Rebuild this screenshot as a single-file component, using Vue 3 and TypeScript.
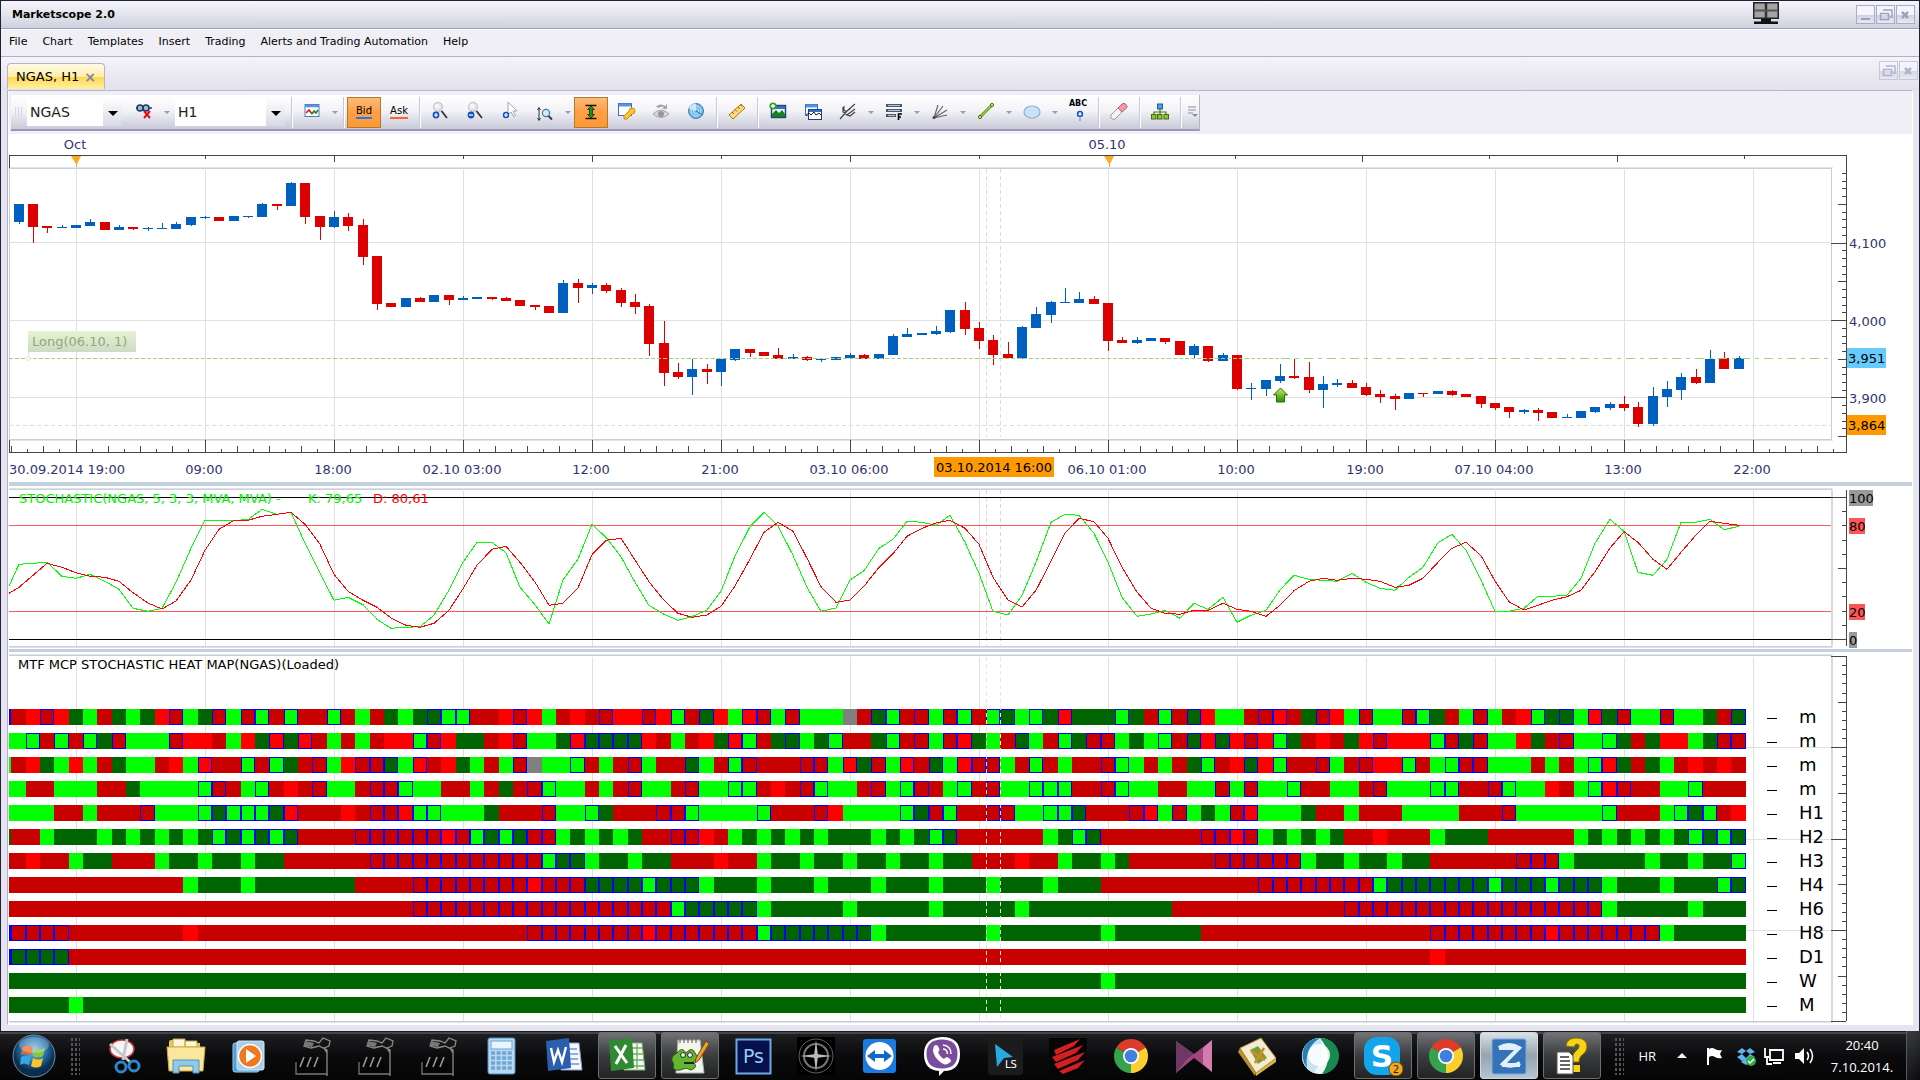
<script setup lang="ts">
type Candle = [up: number, top: number, bottom: number, high: number, low: number]

const menus = ['File', 'Chart', 'Templates', 'Insert', 'Trading', 'Alerts and Trading Automation', 'Help']

/* ---------- time scale ---------- */
const BARS = 121
const PITCH = 43 / 3
const barX = (i: number): number => Math.floor(19.2 + i * PITCH)
const cellX = (i: number): number => Math.floor(11.8 + i * PITCH)
const gridX = Array.from({ length: 14 }, (_, k) => 76 + k * 129)

const timeLabels: { x: number; text: string }[] = [
  { x: 204, text: '09:00' },
  { x: 333, text: '18:00' },
  { x: 462, text: '02.10 03:00' },
  { x: 591, text: '12:00' },
  { x: 720, text: '21:00' },
  { x: 849, text: '03.10 06:00' },
  { x: 1107, text: '06.10 01:00' },
  { x: 1236, text: '10:00' },
  { x: 1365, text: '19:00' },
  { x: 1494, text: '07.10 04:00' },
  { x: 1623, text: '13:00' },
  { x: 1752, text: '22:00' },
]

const topTicks = [
  [205, 4], [334, 7], [463, 4], [592, 7], [721, 4], [850, 7], [979, 4],
  [1235, 4], [1362, 7], [1489, 4], [1617, 7], [1744, 4],
]

const timeTicks = Array.from({ length: 114 }, (_, k) => {
  const x = Math.floor(11.6 + k * 16.125)
  const major = (k - 4) % 8 === 0 && k >= 4
  return { x, len: major ? 12 : k % 2 === 0 ? 6 : 3 }
})

/* ---------- price panel: offsets are thirds of a pixel below y = 160 ---------- */
const candles: Candle[] = [
  [1, 132, 186, 132, 192], [0, 132, 201, 132, 249], [0, 198, 204, 198, 219], [1, 201, 204, 195, 204],
  [1, 195, 204, 195, 204], [1, 186, 198, 177, 198], [0, 186, 210, 186, 210], [1, 201, 210, 195, 210],
  [0, 201, 207, 201, 210], [1, 204, 207, 201, 213], [1, 204, 207, 189, 207], [1, 192, 207, 186, 207],
  [1, 171, 195, 171, 198], [1, 171, 174, 168, 177], [0, 171, 183, 171, 183], [1, 168, 183, 168, 183],
  [1, 168, 171, 168, 174], [1, 132, 171, 129, 171], [0, 132, 138, 132, 150], [1, 69, 138, 66, 138],
  [0, 69, 171, 69, 192], [0, 168, 201, 168, 240], [1, 171, 201, 153, 204], [0, 171, 198, 159, 213],
  [0, 195, 291, 177, 315], [0, 288, 432, 288, 450], [0, 429, 441, 429, 441], [1, 414, 441, 414, 441],
  [0, 414, 426, 411, 426], [1, 405, 426, 405, 426], [0, 405, 420, 405, 435], [1, 414, 420, 408, 420],
  [1, 411, 417, 411, 417], [0, 411, 417, 411, 420], [0, 414, 423, 411, 423], [0, 420, 438, 420, 438],
  [0, 435, 441, 435, 450], [0, 438, 459, 438, 459], [1, 369, 459, 360, 459], [0, 369, 384, 357, 429],
  [1, 375, 384, 369, 402], [0, 375, 393, 369, 399], [0, 390, 429, 384, 441], [0, 426, 441, 402, 462],
  [0, 438, 552, 432, 588], [0, 549, 639, 483, 678], [0, 636, 651, 609, 657], [1, 627, 651, 597, 705],
  [0, 627, 636, 612, 672], [1, 597, 636, 597, 678], [1, 567, 600, 567, 603], [0, 567, 579, 567, 591],
  [0, 576, 588, 576, 588], [0, 585, 597, 564, 597], [1, 591, 597, 582, 597], [0, 591, 600, 588, 603],
  [1, 597, 600, 597, 606], [1, 591, 600, 591, 600], [1, 585, 594, 579, 594], [0, 585, 597, 582, 597],
  [1, 582, 597, 582, 597], [1, 528, 585, 522, 585], [1, 522, 531, 504, 531], [1, 519, 525, 519, 525],
  [1, 513, 522, 498, 525], [1, 450, 516, 450, 519], [0, 450, 507, 426, 525], [0, 504, 543, 486, 567],
  [0, 540, 585, 525, 615], [0, 582, 594, 546, 594], [1, 501, 594, 498, 597], [1, 462, 504, 441, 504],
  [1, 426, 465, 423, 489], [1, 426, 429, 384, 429], [1, 417, 429, 396, 429], [0, 417, 432, 408, 432],
  [0, 429, 543, 429, 573], [0, 540, 549, 531, 549], [1, 540, 549, 531, 552], [1, 534, 543, 534, 543],
  [0, 534, 546, 534, 552], [0, 543, 585, 543, 585], [1, 558, 585, 552, 597], [0, 558, 603, 558, 606],
  [1, 585, 603, 579, 603], [0, 585, 687, 585, 690], [1, 684, 687, 669, 720], [1, 660, 687, 660, 708],
  [1, 648, 663, 612, 669], [0, 648, 654, 597, 657], [0, 651, 690, 606, 699], [1, 672, 690, 648, 744],
  [1, 669, 675, 657, 681], [0, 669, 684, 660, 684], [0, 681, 705, 669, 708], [0, 702, 711, 690, 729],
  [0, 708, 717, 702, 750], [1, 699, 717, 699, 717], [0, 699, 702, 699, 711], [1, 693, 702, 693, 702],
  [0, 693, 705, 690, 708], [0, 702, 711, 702, 711], [0, 708, 732, 708, 744], [0, 729, 744, 729, 750],
  [0, 741, 756, 741, 774], [1, 750, 756, 747, 762], [0, 750, 759, 744, 783], [0, 756, 774, 756, 774],
  [1, 771, 774, 762, 774], [1, 753, 774, 753, 774], [1, 741, 756, 741, 759], [1, 732, 744, 726, 750],
  [0, 732, 744, 708, 753], [0, 741, 792, 726, 801], [1, 708, 792, 681, 798], [1, 687, 711, 663, 741],
  [1, 651, 690, 639, 720], [0, 651, 669, 627, 672], [1, 597, 669, 570, 669], [0, 594, 627, 576, 627],
  [1, 594, 627, 588, 627],
]

const bars = candles.map(([up, top, bottom, high, low], i) => ({
  x: barX(i),
  fill: up ? '#0060c0' : '#dc0000',
  y: 160 + top / 3,
  h: (bottom - top) / 3,
  wy: 160 + high / 3,
  wh: (low - high) / 3,
}))

const priceTicks = Array.from({ length: 35 }, (_, k) => ({
  y: Math.round(173 + k * 7.74),
  len: k % 10 === 9 ? 15 : k % 10 === 4 ? 8 : 4,
}))

/* ---------- stochastic panel: thirds of a pixel below y = 480 ---------- */
const kLine = [
  253, 250, 247, 289, 295, 283, 304, 328, 385, 394, 385, 307, 205, 121, 121, 121, 119, 88, 103, 97, 190,
  280, 361, 352, 374, 418, 445, 442, 440, 406, 330, 247, 187, 187, 218, 322, 374, 432, 300, 237, 133, 172,
  230, 307, 376, 403, 421, 410, 390, 334, 228, 140, 97, 138, 226, 322, 394, 384, 300, 272, 205, 178, 124,
  127, 136, 106, 187, 280, 394, 405, 346, 247, 127, 103, 106, 160, 247, 352, 409, 402, 391, 415, 370, 388,
  352, 427, 406, 391, 330, 286, 298, 301, 304, 280, 307, 325, 331, 292, 262, 188, 163, 211, 300, 394, 394,
  385, 349, 349, 346, 295, 190, 118, 154, 277, 286, 238, 127, 127, 118, 149, 139,
]
const dLine = [
  322, 286, 250, 262, 278, 289, 292, 304, 338, 369, 387, 363, 300, 211, 148, 121, 121, 109, 103, 97, 133,
  193, 283, 334, 361, 382, 414, 436, 442, 430, 391, 326, 256, 208, 199, 247, 306, 376, 370, 324, 224, 181,
  175, 240, 305, 361, 400, 412, 405, 379, 318, 237, 157, 127, 154, 235, 320, 367, 360, 319, 262, 221, 169,
  145, 129, 121, 145, 193, 292, 360, 381, 331, 244, 160, 115, 125, 175, 262, 336, 385, 400, 403, 391, 391,
  370, 388, 394, 409, 376, 332, 304, 295, 301, 295, 298, 304, 322, 316, 295, 247, 205, 187, 227, 303, 365,
  390, 376, 361, 350, 331, 275, 204, 155, 187, 238, 268, 217, 165, 124, 130, 136,
]
const toPoints = (start: number, line: number[]): string =>
  [`9,${480 + start / 3}`, ...line.map((v, i) => `${barX(i)},${(480 + v / 3).toFixed(1)}`)].join(' ')
const kPoints = toPoints(318, kLine)
const dPoints = toPoints(340, dLine)
const stochTicks = Array.from({ length: 11 }, (_, k) => ({
  y: Math.round(497 + k * 14.2),
  len: k % 10 === 0 ? 15 : k === 5 ? 8 : 4,
}))
const levels = [
  { text: '100', y: 490, w: 24, fill: '#999999' },
  { text: '80', y: 518, w: 16, fill: '#ff5555' },
  { text: '20', y: 604, w: 16, fill: '#ff5555' },
  { text: '0', y: 632, w: 8, fill: '#999999' },
]

/* ---------- heat map: run-length rows, capitals carry a blue outline ---------- */
const palette: Record<string, string> = { d: '#c80000', r: '#ff0000', g: '#00ff00', k: '#006400', x: '#808080' }
const heatRows: [label: string, lead: string, cells: string][] = [
  ['m', 'G', 'drDrkgdkgkrDgkDgDGdGddGdgdkgkKGGddrDrgdrdDrr' + 'DrGdKrgRDgDgggxdKGdDgDGdGKgGkRkkkGkdGdKrggdDR' + 'dkDrgDggDGkdgDgdrGkKgRkDggDggkdK'],
  ['m', 'g', 'gGdGdGkDgggDrrdgrkRkRdgdgdrrGDrkkdrDggkRKKKK' + 'rdgdrkRGdkKgkGddkGdDgDRkgdKgdGkDDgkgGdKrKrDrG' + 'kdrdkrDrrrGDkDggrkdDggGkdkrrgkDD'],
  ['m', 'g', 'drkgrgdkggdrgRddGdGkdDgrDDKgRdrkgdgDxggGdgdD' + 'gddKgdGDdddDDgRkDgRdKgRDDgdGdgddDGgdgdkGdrKrG' + 'ddDgdDrrGdgGDDgggdgdgGRkdkgdrdrd'],
  ['m', 'g', 'gddgggddkggggGDdgGdrdDggdDDGggddgdkdDGggdgdD' + 'ggdDggGGdrdDGggdDgGDdgGdDggGGGddDGggddggDgDgg' + 'GddggdDgggGGddDGggrdgGRDddggGddd'],
  ['H1', 'g', 'gggddgdddDgggGKGGGKRdddrdDDRGGgggkdddDggGkdd' + 'dDDGggggGdddDrggggGKDGddDDggGGKdddDRgDgkgDRgg' + 'gkddgdddggggdddDggggggGdddgGKGdr'],
  ['H2', 'k', 'ddgkkkgkgkgkgkGKGKGKddddDDDDDDRDGKGKDDgkgkgk' + 'ddDDrdgkgkgkgkkkgkgkGKddddddgkGKdddddddDDRDgk' + 'gkgkddrdddgkkkddddddgkgkgkgkGKGK'],
  ['H3', 'd', 'drddgkkdddgkkgkkgkk6d12DGKKgkkg' + 'kkdddrddgkkgkkgkkgkkgkkdddrddgkkgk6d5D' + 'Dgkkgkkgkk6d3Dg5kgkkgkkG'],
  ['H4', 'd', '12dg3kg7k4d8DR3D4K' + 'G3Kg3kg3kg3kg3kg3kg3kg3k11d2D' + '6DG7KG3KG3Kg3kg3kGK'],
  ['H6', 'd', '28d18DG5Kg5kg5kg5kg10k12d18Dg5kg3k'],
  ['H8', 'D', '4D8dr23d8DR7DG7Kg7kg7kg6k16d8DR7Dg5k'],
  ['D1', 'K', '4K95dr21d'],
  ['W', 'k', '76kg44k'],
  ['M', 'k', '4kg116k'],
]

interface Cell { x: number; w: number; fill: string; outlined: boolean }
const expand = (s: string): string => s.replace(/(\d+)([a-zA-Z])/g, (_m, n: string, c: string) => c.repeat(Number(n)))
const heat = heatRows.map(([label, lead, src], row) => {
  const cells: Cell[] = [{ x: 9, w: 2, fill: palette[lead.toLowerCase()], outlined: lead !== lead.toLowerCase() }]
  expand(src).slice(0, BARS).split('').forEach((c, i) => {
    const x = cellX(i)
    cells.push({ x, w: cellX(i + 1) - x, fill: palette[c.toLowerCase()], outlined: c !== c.toLowerCase() })
  })
  return { label, y: 709 + row * 24, cells }
})
const heatTicks = Array.from({ length: 41 }, (_, k) => ({
  y: Math.round(656 + k * 9.13),
  len: k % 10 === 0 ? 15 : k % 5 === 0 ? 8 : 4,
}))

/* ---------- toolbar ---------- */
const icons: Record<string, string> = {
  link: '<path d="M2 7h16" stroke="#1b3a66" stroke-width="1.500"/><circle cx="6" cy="7" r="3" fill="#9db9d8" stroke="#1b3a66" stroke-width="1.500"/><circle cx="12" cy="7" r="3" fill="#9db9d8" stroke="#1b3a66" stroke-width="1.500"/><path d="M10 10l6 7M16 10l-6 7" stroke="#e21010" stroke-width="2"/>',
  chart: '<rect x="3" y="3.500" width="14" height="12" fill="#fff" stroke="#4a7cc4"/><path d="M3 5h14" stroke="#5c94dd" stroke-width="2.600"/><path d="M4 12l3-3 3 4" stroke="#e01818" stroke-width="1.600" fill="none"/><path d="M10 13l2-3 2 2 2-3" stroke="#138a13" stroke-width="1.600" fill="none"/>',
  zoomin: '<circle cx="8" cy="6" r="4.500" fill="url(#glass)" stroke="#c9cbd0" stroke-width="1.300"/><path d="M11.500 10l5.500 7" stroke="#333" stroke-width="1.800"/><circle cx="6" cy="14" r="3.400" fill="#1454b8"/><path d="M4 14h4M6 12v4" stroke="#fff" stroke-width="1.200"/>',
  zoomout: '<circle cx="8" cy="6" r="4.500" fill="url(#glass)" stroke="#c9cbd0" stroke-width="1.300"/><path d="M11.500 10l5.500 7" stroke="#333" stroke-width="1.800"/><circle cx="6" cy="14" r="3.400" fill="#1454b8"/><path d="M4 14h4" stroke="#fff" stroke-width="1.200"/>',
  pointer: '<path d="M8 1v13l3-3 3 5 1.500-1-2.500-5h4z" fill="#fff" stroke="#a3a6ac"/><circle cx="6" cy="14" r="3.200" fill="#1454b8"/><path d="M4 14h4M6 12v4" stroke="#fff" stroke-width="1.200"/>',
  vzoom: '<path d="M4 7v12M2.500 9L4 6.500 5.500 9M2.500 17L4 19.500 5.500 17" stroke="#333" fill="none"/><circle cx="11" cy="12" r="3.600" fill="#cfeaf8" stroke="#3f7ea8" stroke-width="1.200"/><path d="M13.500 15l3.500 3.500" stroke="#333" stroke-width="1.800"/>',
  fit: '<path d="M4.500 4.500h11M4.500 17.500h11" stroke="#111" stroke-width="1.300"/><path d="M10 5l3.500 3.500h-2v5h2L10 17l-3.500-3.500h2v-5h-2z" fill="#1c8f1c" stroke="#0c300c" stroke-width=".8"/>',
  key: '<rect x="2.500" y="2.500" width="13" height="12" fill="#fff" stroke="#3a6fc0"/><path d="M3 4h12" stroke="#5b93de" stroke-width="3"/><path d="M8 15l5-5a3 3 0 1 1 3 3l-5 5H8z" fill="#ffc42e" stroke="#c78d14"/>',
  eye: '<path d="M5 6a6 6 0 0 1 9-1l2-2v5h-5l2-1.500a4 4 0 0 0-5 .5z" fill="#a6a6ab"/><path d="M2 13q8-8 16 0-8 7-16 0z" fill="#d7d7da" stroke="#a6a6ab"/><circle cx="10" cy="13" r="3" fill="#97979c"/>',
  radar: '<circle cx="10" cy="10" r="7.500" fill="#6cb5e4" stroke="#3884bd"/><circle cx="10" cy="10" r="5" fill="none" stroke="#d4edfb"/><circle cx="10" cy="10" r="2.500" fill="none" stroke="#d4edfb"/><path d="M10 10V2.500a7.500 7.500 0 0 0-7 5z" fill="#c9e8fa"/><path d="M10 10l7 4" stroke="#2b74ad"/>',
  ruler: '<path d="M2 14L14 3l4 4L6 18z" fill="#ffd877" stroke="#a97c1c"/><path d="M5 11l2 2M8 8.500l2 2M11 6l2 2M13.500 4l1.500 1.500" stroke="#8a6210"/>',
  picture: '<rect x="3.500" y="4.500" width="14" height="12" fill="#e8f5ff" stroke="#1c3f86" stroke-width="1.400"/><path d="M4 16v-3l4-4 3 3 3-3 3 4v3z" fill="#16821c"/><path d="M4 6.500h13" stroke="#3a6fc0" stroke-width="3"/><circle cx="5" cy="5" r="3.600" fill="#3a9c22"/><path d="M3 5h4M5 3v4" stroke="#fff" stroke-width="1.300"/>',
  windows: '<rect x="2.500" y="3.500" width="12" height="11" fill="#fff" stroke="#3a6fc0"/><path d="M3 5h11" stroke="#5b93de" stroke-width="3"/><rect x="5.500" y="8.500" width="13" height="10" fill="#fff" stroke="#1c3f86"/><path d="M6 10h12" stroke="#3a6fc0" stroke-width="2"/><path d="M3 14l3-2 2 2 3-3 2 3 3-2 2 2" stroke="#222" fill="none"/>',
  fork: '<path d="M2 18L9 10M6 5q-1 6 3 5l8-7M5 6v5l4 3 8-6M9 10l4-3M9 14l3 1 5-4" stroke="#444" stroke-width="1.200" fill="none"/>',
  fib: '<path d="M2 4.500h16M2 9.500h16M2 14.500h10" stroke="#4a5668" stroke-width="3"/><path d="M4 4.500h12M4 9.500h12M4 14.500h7" stroke="#b8c4d4" stroke-width="1"/><path d="M14.500 19v-6H18M14.500 16H17" stroke="#000" stroke-width="1.600" fill="none"/>',
  fan: '<path d="M4 17L8 4M4 17L13 5M4 17L17 9M4 17l13-3" stroke="#666" stroke-width="1.200"/><circle cx="4" cy="16.500" r="1.500" fill="#444"/>',
  line: '<path d="M4 16L16 4" stroke="#4f7f14" stroke-width="2.800"/><path d="M4 16L16 4" stroke="#a6d63d" stroke-width="1.400"/><circle cx="4" cy="16" r="1.600" fill="#d4ed6c" stroke="#4c6d0b"/><circle cx="16" cy="4" r="1.600" fill="#d4ed6c" stroke="#4c6d0b"/>',
  ellipse: '<ellipse cx="10" cy="11" rx="8" ry="6" fill="#cde2f6" stroke="#8db2d8" stroke-width="1.200"/>',
  text: '<circle cx="12" cy="13" r="3.200" fill="#1454b8"/><path d="M10 13h4M12 11v4" stroke="#fff" stroke-width="1.200"/><path d="M12 17v3" stroke="#8fb2e6" stroke-width="2"/>',
  eraser: '<path d="M2 14l7-7 4 4-7 7q-2 1-3.500-.5T2 14z" fill="#f4f4f4" stroke="#9a9a9a"/><path d="M9 7l4-4q2-1.500 4 .5t.5 3.500l-4.500 4z" fill="#f19aa6" stroke="#b86670"/>',
  tree: '<path d="M10 6v5M4 14v-3h12v3M10 11v3" stroke="#4a7a10" fill="none" stroke-width="1.200"/><rect x="7.500" y="3" width="5" height="5" fill="#4b9bea" stroke="#1f5fa8"/><rect x="1.500" y="13.500" width="4.500" height="4.500" fill="#8fc52c" stroke="#3f6d0a"/><rect x="7.500" y="13.500" width="4.500" height="4.500" fill="#8fc52c" stroke="#3f6d0a"/><rect x="14" y="13.500" width="4.500" height="4.500" fill="#8fc52c" stroke="#3f6d0a"/>',
  more: '<path d="M3 6h8M3 9h8M3 12h5" stroke="#8d8da2"/><path d="M7 13h6l-3 3z" fill="#8d8da2"/>',
}

type Tool = { kind: 'icon' | 'arrow' | 'sep' | 'side'; name?: string; on?: boolean }
const I = (name: string, on = false): Tool => ({ kind: 'icon', name, on })
const A: Tool = { kind: 'arrow' }
const S: Tool = { kind: 'sep' }
const tools: Tool[] = [
  S, I('chart'), A, S, { kind: 'side', name: 'Bid', on: true }, { kind: 'side', name: 'Ask' }, S,
  I('zoomin'), I('zoomout'), I('pointer'), I('vzoom'), A, I('fit', true), I('key'), I('eye'), I('radar'), S,
  I('ruler'), S, I('picture'), I('windows'), I('fork'), A, I('fib'), A, I('fan'), A, I('line'), A,
  I('ellipse'), A, I('text'), S, I('eraser'), S, I('tree'), S,
]

/* ---------- taskbar ---------- */
const chrome = '<path d="M20 20L5.300 11.500A17 17 0 0 1 34.700 11.500z" fill="#dd3b2c"/><path d="M20 20L34.700 11.500A17 17 0 0 1 20 37z" fill="#fbcf2f"/><path d="M20 20v17A17 17 0 0 1 5.300 11.500z" fill="#35a34c"/><circle cx="20" cy="20" r="8" fill="#fff"/><circle cx="20" cy="20" r="6.300" fill="#3f7fe0"/>'
const robot = '<path d="M3 37V22L12 28V22L21 28V22L30 28V37z" fill="#050505"/><path d="M4 26v12h31" fill="none" stroke="#777" stroke-width="1.300"/><path d="M8 31l4-10M15 31l4-10M22 31l4-10" stroke="#999" stroke-width="1.600"/><path d="M35 38V14l-8-4-8 2-7-2 2-6 8 1 5 2 4-5 7 3-1 5-5 2 3 5v23z" fill="#151515" stroke="#8a8a8a" stroke-width="1.300"/><path d="M13 5l9 2-2 4-8-1z" fill="#777"/>'
const tasks: { name: string; state?: string; art: string }[] = [
  { name: 'Snipping tool', art: '<ellipse cx="19" cy="13" rx="12" ry="9" fill="#f6f6f6" stroke="#c43a3a" stroke-width="1.500"/><path d="M7 8l20 18M24 3L20 24" stroke="#c8c8cc" stroke-width="3"/><circle cx="31" cy="30" r="5" fill="none" stroke="#2d86c8" stroke-width="3"/><circle cx="18" cy="31" r="5" fill="none" stroke="#2d86c8" stroke-width="3"/>' },
  { name: 'Explorer', art: '<path d="M3 6q0-2 2-2h9l3 3h17v27H3z" fill="#e8c766"/><path d="M7 3h12v8H7zM19 5h12v6H19z" fill="#fff6d8" stroke="#c9a545"/><path d="M1 11h38l-2 24H3z" fill="#fae69d" stroke="#cfa93f"/><path d="M7 37V24h26v13h-6v-7H13v7z" fill="#8ec9ea" stroke="#4e95c0"/>' },
  { name: 'Media player', art: '<rect x="4" y="7" width="26" height="29" rx="2" fill="#4d9fd8" stroke="#9bd0f2"/><rect x="8" y="5" width="27" height="29" rx="2" fill="#a9cfe8" stroke="#d4ebf8"/><circle cx="21" cy="20" r="11.500" fill="#f0781e" stroke="#fff" stroke-width="1.500"/><path d="M17 13l10 7-10 7z" fill="#fff"/>' },
  { name: 'Tool A', art: robot },
  { name: 'Tool B', art: robot },
  { name: 'Tool C', art: robot },
  { name: 'Calculator', art: '<rect x="7" y="2" width="27" height="36" rx="2" fill="#b9d9f1" stroke="#4d8cc0"/><rect x="10" y="5" width="21" height="8" fill="#e9f5fd" stroke="#6ba2cf"/><path d="M10 17h21M10 22h21M10 27h21M10 32h21" stroke="#6fa6d2" stroke-width="3.400" stroke-dasharray="4 1.600"/>' },
  { name: 'Word', art: '<path d="M14 7h21l3 27H17z" fill="#f4f8fd" stroke="#7e9cc8"/><path d="M20 13h13M20 18h14M21 23h13M22 28h13" stroke="#7196cf" stroke-width="1.500"/><path d="M2 5l23-3 2 30-23 3z" fill="#2b5fae"/><path d="M7 12l3 14 4-12 4 12 4-15" stroke="#fff" stroke-width="2.400" fill="none"/>' },
  { name: 'Excel', state: 'open', art: '<path d="M14 7h21l3 27H17z" fill="#f4fbf1" stroke="#7fae75"/><path d="M25 12h11M25 18h11M26 24h11M26 30h11M30 8v25" stroke="#6fab5d" stroke-width="1.300"/><path d="M2 5l23-3 2 30-23 3z" fill="#2f8a32"/><path d="M8 10l12 17M19 9L9 28" stroke="#fff" stroke-width="3"/>' },
  { name: 'Notepad++', state: 'open', art: '<path d="M8 4h22l4 33H6z" fill="#f2f5ee" stroke="#adb8a4"/><path d="M10 3v4M14 3v4M18 3v4M22 3v4M26 3v4" stroke="#555"/><path d="M7 17q5-7 9 0 6-7 9 0 5 6-2 9 6 5-2 8-5-3-8-1-6 3-10-1 2-4-1-7-1-5 5-8z" fill="#63b62f" stroke="#2a5c10"/><circle cx="13" cy="19" r="2.400" fill="#fff" stroke="#222"/><circle cx="20" cy="19" r="2.400" fill="#fff" stroke="#222"/><path d="M14 27h10" stroke="#222" stroke-width="2"/><path d="M36 5L26 22l-1 5 4-3L39 8z" fill="#f0a030" stroke="#744a10"/>' },
  { name: 'Photoshop', art: '<rect x="3.500" y="3.500" width="34" height="34" fill="#06104a" stroke="#6fa8e8" stroke-width="2"/><text x="20.500" y="27" text-anchor="middle" fill="#9cc8f8" font-size="19">Ps</text>' },
  { name: 'Compass', art: '<rect x="1" y="1" width="38" height="38" fill="#000"/><circle cx="20" cy="20" r="17" fill="none" stroke="#666" stroke-width="1"/><circle cx="20" cy="20" r="12" fill="none" stroke="#777" stroke-width="2"/><path d="M20 4l1.800 14.200L36 20l-14.200 1.800L20 36l-1.800-14.200L4 20l14.200-1.800z" fill="#bbb"/>' },
  { name: 'TeamViewer', art: '<rect x="4" y="3" width="33" height="34" rx="3" fill="#1c7be0"/><circle cx="20.500" cy="20" r="14" fill="#fff"/><path d="M8 20l8-6v4h9v-4l8 6-8 6v-4h-9v4z" fill="#1268c8"/>' },
  { name: 'Viber', art: '<path d="M20 1q18 0 18 17T22 35l-5 5v-5Q2 34 2 18T20 1z" fill="#fff"/><path d="M20 3.500q15.500 0 15.500 14.500T20 32.500 4.500 18 20 3.500z" fill="#7a4d9c"/><path d="M12 10q3-3 5 2 1 3-1 4 2 5 6 7 2-3 5-1 4 3 0 5-4 4-11-3t-4-14z" fill="#fff"/><path d="M21 9q8 1 8 9M21 13q4 0 4.500 5" fill="none" stroke="#fff" stroke-width="1.500"/>' },
  { name: 'LS', art: '<rect x="3" y="1" width="35" height="38" rx="3" fill="#1b1b1b"/><path d="M10 8l18 13-9 1-7 9z" fill="#28a9e2"/><text x="20" y="32" fill="#fff" font-size="10">LS</text>' },
  { name: 'Claw', art: '<rect x="1" y="2" width="38" height="36" fill="#050505"/><path d="M6 14l26-11-6 7-18 9zM4 21l31-12-7 8-20 9zM6 28l31-12-7 8-20 9zM11 35l26-11-7 8-15 6z" fill="#d21f22"/>' },
  { name: 'Chrome', art: chrome },
  { name: 'Media maker', art: '<path d="M2 5l18 13L38 4v32L20 22 2 37z" fill="#a0467e"/><path d="M2 5l18 13-8 6L2 37z" fill="#6e3866"/><path d="M38 4v32l-9-8V12z" fill="#d47cae"/>' },
  { name: 'Map', art: '<path d="M3 12L24 2l15 20-20 15z" fill="#f3ecd2" stroke="#a58538"/><path d="M3 12l16 25-1 3L1 16z" fill="#b8902c"/><path d="M19 37l20-15v4L19 40z" fill="#d8b14a"/><path d="M13 14l8-4 9 12-9 6z" fill="#6fa046"/><path d="M14 15l14 9M27 12l-9 15" stroke="#d88a1a" stroke-width="2.500"/>' },
  { name: 'Globe', art: '<circle cx="20" cy="20" r="18" fill="#eef7f4"/><path d="M20 2a18 18 0 0 1 2 36Q35 20 20 2z" fill="#168a52"/><path d="M20 2a18 18 0 0 0-6 35Q26 18 20 2z" fill="#c5e3f2"/><path d="M20 2Q4 12 7 32 0 22 4 12T20 2z" fill="#2b7db0"/><circle cx="19" cy="19" r="11" fill="#fff" opacity=".85"/>' },
  { name: 'Skype', state: 'open', art: '<rect x="1" y="1" width="36" height="38" rx="13" fill="#12a5ea"/><text x="19" y="31" text-anchor="middle" fill="#fff" font-size="31" font-weight="bold">S</text><circle cx="33" cy="33" r="7" fill="#f6a91d" stroke="#7c4c00"/><text x="33" y="37" text-anchor="middle" fill="#222" font-size="10">2</text>' },
  { name: 'Chrome windows', state: 'open', art: chrome },
  { name: 'Marketscope', state: 'active', art: '<rect x="3" y="3" width="34" height="35" rx="2" fill="#3473b8" stroke="#7faee0"/><path d="M10 12q10-6 20 0L14 28q8 4 17-1M10 12h17M13 29h18" fill="none" stroke="#e2effc" stroke-width="4"/>' },
  { name: 'Help', state: 'open', art: '<path d="M14 10q1-8 10-8 11 0 11 9 0 5-6 9-2 2-2 6h-7q0-8 4-11 4-3 3-6-3-3-5 2z" fill="#f7d417" stroke="#8b7300"/><rect x="20" y="29" width="8" height="7" fill="#f7d417"/><path d="M5 16h12l4 4v18H5z" fill="#fff" stroke="#555"/><path d="M8 21h9M8 25h10M8 29h10M8 33h10" stroke="#333" stroke-width="1.300"/>' },
]
</script>

<template>
  <div class="app">
    <svg class="defs" width="0" height="0" aria-hidden="true">
      <defs>
        <radialGradient id="glass" cx="40%" cy="35%"><stop offset="0" stop-color="#fff" /><stop offset="1" stop-color="#dde1e5" /></radialGradient>
        <linearGradient id="arrowUp" x2="0" y2="1"><stop offset="0" stop-color="#c8ee5a" /><stop offset="1" stop-color="#2f8a08" /></linearGradient>
        <linearGradient id="note" x2="0" y2="1"><stop offset="0" stop-color="#e6f3d2" /><stop offset="1" stop-color="#cfdac6" /></linearGradient>
      </defs>
    </svg>

    <main class="window">
      <header class="title">
        <h1>Marketscope 2.0</h1>
        <svg class="monitor" width="26" height="24" viewBox="0 0 26 24" aria-hidden="true">
          <rect x="0" y="1" width="26" height="17" fill="#222" />
          <path d="M1.500 2.500h23v14h-23z" fill="#a4a4a4" />
          <path d="M13 2v15" stroke="#333" stroke-width="2.500" />
          <path d="M1 9.500h24" stroke="#555" stroke-width="2" />
          <path d="M8 18h10v3H8zM1 20.500h24V23H1z" fill="#111" />
        </svg>
        <div class="controls">
          <button class="ctl" type="button" aria-label="Minimize"><svg width="17" height="17"><path d="M4 12h9v2H4z" fill="#9ea1c2" /></svg></button>
          <button class="ctl" type="button" aria-label="Restore"><svg width="17" height="17"><path d="M6 4h9v7h-2M3.500 7.500h8v6h-8z" fill="none" stroke="#9ea1c2" stroke-width="1.500" /></svg></button>
          <button class="ctl" type="button" aria-label="Close"><svg width="17" height="17"><path d="M5 6l6 6M11 6l-6 6" stroke="#9ea1c2" stroke-width="2.500" /></svg></button>
        </div>
      </header>

      <nav class="menu">
        <button v-for="m in menus" :key="m" type="button">{{ m }}</button>
      </nav>

      <div class="tabs">
        <button class="tab" type="button">NGAS, H1 <span aria-hidden="true">×</span></button>
        <div class="controls dim">
          <button class="ctl" type="button" aria-label="Restore chart"><svg width="17" height="17"><path d="M6 4h9v7h-2M3.500 7.500h8v6h-8z" fill="none" stroke="#9ea1c2" stroke-width="1.500" /></svg></button>
          <button class="ctl" type="button" aria-label="Close chart"><svg width="17" height="17"><path d="M5 6l6 6M11 6l-6 6" stroke="#9ea1c2" stroke-width="2.500" /></svg></button>
        </div>
      </div>

      <section class="client">
        <div class="dock">
          <div class="toolbar">
            <i class="grip"></i>
            <div class="combo symbol">
              <select aria-label="Symbol"><option>NGAS</option></select><i></i>
            </div>
            <button class="tool" type="button" aria-label="link"><svg width="20" height="22" viewBox="0 0 20 22" v-html="icons.link"></svg></button>
            <button class="drop" type="button" aria-label="Link options"></button>
            <div class="combo period">
              <select aria-label="Period"><option>H1</option></select><i></i>
            </div>
            <template v-for="(t, i) in tools" :key="i">
              <i v-if="t.kind === 'sep'" class="sep"></i>
              <button v-else-if="t.kind === 'arrow'" class="drop" type="button" aria-label="Options"></button>
              <button v-else-if="t.kind === 'side'" class="tool side" :class="[t.name, { on: t.on }]" type="button"><span>{{ t.name }}</span></button>
              <button v-else class="tool" :class="{ on: t.on, abc: t.name === 'text' }" type="button" :aria-label="t.name">
                <span v-if="t.name === 'text'" class="abc-word">ABC</span>
                <svg width="20" height="22" viewBox="0 0 20 22" v-html="icons[t.name ?? '']"></svg>
              </button>
            </template>
            <button class="more" type="button" aria-label="More"><svg width="14" height="20" viewBox="0 0 14 20" v-html="icons.more"></svg></button>
          </div>
        </div>

        <!-- price -->
        <svg class="panel" viewBox="9 134 1903 348">
          <g shape-rendering="crispEdges">
            <path d="M9 167.500H1833M9 440.500H1833" stroke="#e0e3e6" />
            <path v-for="x in gridX" :key="x" :d="`M${x + 0.5} 170V440`" stroke="#e0e0e0" />
            <path d="M9 242.500H1830M9 320.500H1830M9 397.500H1830" stroke="#e0e0e0" />
            <path d="M9 168.500H1831.500V439.500H9M9.500 168V440" fill="none" stroke="#c4cfdb" />
            <path d="M9 425.500H1832M986.500 169V437M1000.500 169V437" stroke="#dcdcdc" stroke-dasharray="4 3" />
            <path d="M9.500 168V155.500H1846.500V452.500H9.500V440" fill="none" stroke="#444" />
            <path v-for="t in topTicks" :key="'a' + t[0]" :d="`M${t[0] + 0.5} 155v${t[1]}`" stroke="#444" />
            <path v-for="t in timeTicks" :key="'b' + t.x" :d="`M${t.x + 0.5} 452v${-t.len}`" stroke="#444" />
            <path v-for="t in priceTicks" :key="'c' + t.y" :d="`M1846 ${t.y + 0.5}h${-t.len}`" stroke="#444" />
            <g v-for="(b, i) in bars" :key="i" :fill="b.fill">
              <rect :x="b.x" :y="b.wy" width="1" :height="b.wh" />
              <rect :x="b.x - 5" :y="b.y" width="10" :height="b.h" />
            </g>
            <path d="M9 358.500H1280" stroke="#a4d084" stroke-dasharray="4 2" />
            <path d="M1281 358.500H1829" stroke="#a4d084" stroke-dasharray="9 5 4 5" />
          </g>
          <path d="M71 156h10l-4 8v3h-1v-3zM1104 156h10l-4 8v3h-1v-3z" fill="#ffa726" />
          <path d="M1280.500 388l7 7h-3v7h-8v-7h-3z" fill="url(#arrowUp)" stroke="#2c6b0d" />
          <rect x="28" y="331" width="108" height="21" fill="url(#note)" />
          <path d="M28.500 352v5" stroke="#dfedc9" />
          <circle cx="28" cy="358.500" r="2" fill="#fff" stroke="#dfedc9" />
          <text x="32" y="346" class="long">Long(06.10, 1)</text>
          <g class="axis">
            <text x="75" y="149" text-anchor="middle">Oct</text>
            <text x="1107" y="149" text-anchor="middle">05.10</text>
            <text x="9" y="474">30.09.2014 19:00</text>
            <text v-for="l in timeLabels" :key="l.text" :x="l.x" y="474" text-anchor="middle">{{ l.text }}</text>
            <text x="1849" y="248">4,100</text>
            <text x="1849" y="326">4,000</text>
            <text x="1849" y="403">3,900</text>
          </g>
          <rect x="934" y="457" width="120" height="20" fill="#ff9900" />
          <rect x="1847" y="348" width="39" height="20" fill="#66ccff" />
          <rect x="1847" y="415" width="39" height="20" fill="#ff9900" />
          <text x="994" y="472" text-anchor="middle">03.10.2014 16:00</text>
          <text x="1848" y="363">3,951</text>
          <text x="1848" y="430">3,864</text>
        </svg>

        <div class="split"></div>

        <!-- stochastic -->
        <svg class="panel" viewBox="9 486 1903 163">
          <g shape-rendering="crispEdges">
            <path d="M9 488.500H1833M9 647.500H1833" stroke="#e0e3e6" />
            <path v-for="x in gridX" :key="x" :d="`M${x + 0.5} 491V647`" stroke="#e0e0e0" />
            <path d="M986.500 490V645M1000.500 490V645" stroke="#d8d8d8" stroke-dasharray="4 3" />
            <path d="M9 489.500H1832M9 646.500H1832" stroke="#c4cfdb" />
            <path d="M1832 490V646" stroke="#d4dae2" stroke-width="2" />
            <path d="M9 525.500H1831M9 611.500H1831" stroke="#ff5555" />
            <path d="M9 497.500H1831M9 639.500H1831" stroke="#000" />
            <path d="M1846.500 490V646" stroke="#444" />
            <path v-for="t in stochTicks" :key="t.y" :d="`M1846 ${t.y + 0.5}h${-t.len}`" stroke="#444" />
            <polyline :points="kPoints" fill="none" stroke="#00ff00" />
            <polyline :points="dPoints" fill="none" stroke="#ff0000" />
          </g>
          <text x="19" y="503" fill="#00f000">STOCHASTIC(NGAS, 5, 3, 3, MVA, MVA) -</text>
          <text x="308" y="503" fill="#00f000">K: 79,65</text>
          <text x="373" y="503" fill="#ff0000">D: 80,61</text>
          <g v-for="l in levels" :key="l.text">
            <rect x="1849" :y="l.y" :width="l.w" height="16" :fill="l.fill" />
            <text x="1849" :y="l.y + 13">{{ l.text }}</text>
          </g>
        </svg>

        <div class="split thin"></div>

        <!-- heat map -->
        <svg class="panel" viewBox="9 652 1903 372">
          <g shape-rendering="crispEdges">
            <path d="M9 654.500H1833M9 1022.500H1833" stroke="#e0e3e6" />
            <path v-for="x in gridX" :key="x" :d="`M${x + 0.5} 657V1022`" stroke="#e0e0e0" />
            <path d="M9 747.500H1830M9 839.500H1830M9 930.500H1830" stroke="#e0e0e0" />
            <path d="M9 655.500H1832M9 1021.500H1832" stroke="#c4cfdb" />
            <path d="M1832 656V1021" stroke="#d4dae2" stroke-width="2" />
            <path d="M1846.500 656V1021" stroke="#444" />
            <path v-for="t in heatTicks" :key="t.y" :d="`M1846 ${t.y + 0.5}h${-t.len}`" stroke="#444" />
            <g v-for="row in heat" :key="row.y">
              <template v-for="c in row.cells" :key="c.x">
                <rect :x="c.x" :y="row.y" :width="c.w" height="16" :fill="c.fill" />
                <rect v-if="c.outlined" :x="c.x + 0.5" :y="row.y + 0.5" :width="c.w - 1" height="15" fill="none" stroke="#0000ff" />
              </template>
            </g>
            <path d="M986.500 657V1020M1000.500 657V1020" stroke="#e6e6e6" stroke-dasharray="4 3" />
          </g>
          <text x="18" y="669">MTF MCP STOCHASTIC HEAT MAP(NGAS)(Loaded)</text>
          <g v-for="row in heat" :key="'l' + row.y" class="rowname">
            <path :d="`M1767 ${row.y + 9.5}h10`" stroke="#000" shape-rendering="crispEdges" />
            <text x="1799" :y="row.y + 14">{{ row.label }}</text>
          </g>
        </svg>
      </section>
    </main>

    <footer class="taskbar">
      <button class="start" type="button" aria-label="Start">
        <svg width="46" height="46" viewBox="0 0 46 46">
          <defs><radialGradient id="orb" cy="35%"><stop offset="0" stop-color="#7fc4ec" /><stop offset=".6" stop-color="#256fa8" /><stop offset="1" stop-color="#0b2c4c" /></radialGradient></defs>
          <circle cx="23" cy="23" r="21" fill="url(#orb)" stroke="#6f8da4" />
          <path d="M12 14q5-3 10 0l-2 8q-5-3-10 0z" fill="#f0672a" />
          <path d="M24 15q5 3 10 0l-2 8q-5 3-10 0z" fill="#8cc63e" />
          <path d="M10 24q5-3 10 0l-2 8q-5-3-9 0z" fill="#38a5e4" />
          <path d="M22 25q5 3 10 0l-2 8q-5 3-10 0z" fill="#fdc52b" />
          <ellipse cx="23" cy="12" rx="15" ry="8" fill="#fff" opacity=".25" />
        </svg>
      </button>
      <i class="dots"></i>
      <div class="tasks">
        <button v-for="t in tasks" :key="t.name" class="task" :class="t.state" type="button" :aria-label="t.name">
          <svg width="40" height="40" viewBox="0 0 40 40" v-html="t.art"></svg>
        </button>
      </div>
      <i class="dots"></i>
      <div class="tray">
        <span class="lang">HR</span>
        <svg class="status" width="142" height="24" viewBox="0 0 142 24" aria-hidden="true">
          <path d="M5 14l5-5 5 5z" fill="#f2f2f2" />
          <path d="M36 4v17" stroke="#fff" stroke-width="2" /><path d="M37 5q3-2 6 0t7 1l-2 4 2 4q-4 1-7-1t-6 0z" fill="#fff" />
          <path d="M65 8l5-4 4 3-4 3zM83 8l-5-4-4 3 4 3zM65 13l5 4 4-3-4-4zM83 13l-5 4-4-3 4-4zM69 18l5-4 5 4-5 3z" fill="#5eb3f2" />
          <circle cx="79" cy="17" r="5" fill="#2fae3f" /><path d="M76 17l2 2 4-4" stroke="#fff" stroke-width="1.500" fill="none" />
          <path d="M98 6h13v10H98zM93 4v9h4M101 19h8M95 13v7h5" fill="none" stroke="#fff" stroke-width="1.800" />
          <path d="M123 9h4l5-5v16l-5-5h-4z" fill="#fff" /><path d="M135 8q3 4 0 8M138 5q5 7 0 14" fill="none" stroke="#fff" stroke-width="1.500" />
        </svg>
        <time class="clock"><span>20:40</span><span>7.10.2014.</span></time>
        <button class="peek" type="button" aria-label="Show desktop"></button>
      </div>
    </footer>
  </div>
</template>

<style>
body {
  background: #0b0b0d;
}
</style>

<style scoped>
.app {
  min-height: 100vh;
  display: flex;
  flex-direction: column;
  font: 13px "DejaVu Sans", Verdana, sans-serif;
  color: #000;
}
.app *,
.app {
  box-sizing: border-box;
}
button {
  font: inherit;
  color: inherit;
  background: none;
  border: 0;
  padding: 0;
  margin: 0;
}
.defs {
  position: absolute;
}
.window {
  flex: 1;
  border: 1px solid #20203a;
  border-bottom: 0;
  background: #e5e4ef;
}
.title {
  height: 28px;
  display: flex;
  align-items: center;
  padding-left: 11px;
  background: linear-gradient(#f6f6fb, #e3e4ec 50%, #ced1de);
  border-bottom: 1px solid #9c9fc0;
}
.title h1 {
  margin: 0;
  font-size: 11px;
  font-weight: bold;
  flex: 1;
}
.monitor {
  margin-right: 77px;
  align-self: flex-start;
}
.controls {
  display: flex;
  gap: 1px;
  margin-right: 4px;
}
.ctl {
  width: 19px;
  height: 19px;
  border: 1px solid #a9acc9;
  background: linear-gradient(#f5f5fb 50%, #cfd1e0 52%, #e8e9f2);
  display: flex;
}
.dim {
  margin-right: 1px;
}
.dim .ctl {
  border-color: #b9bbd3;
  opacity: 0.75;
}
.menu {
  height: 28px;
  display: flex;
  align-items: center;
  gap: 15px;
  padding: 0 8px 4px;
  font-size: 11px;
  background: #f0eff5;
  border-top: 1px solid #fff;
  border-bottom: 1px solid #b3b0ca;
}
.tabs {
  height: 33px;
  display: flex;
  align-items: flex-end;
  justify-content: space-between;
  padding-left: 6px;
  background: linear-gradient(#f4f3f9, #e2e1ed);
}
.tabs .controls {
  align-self: flex-start;
  margin-top: 4px;
}
.tab {
  height: 26px;
  width: 98px;
  margin-bottom: 1px;
  padding: 0 8px;
  display: flex;
  align-items: center;
  justify-content: space-between;
  border: 1px solid #b6b3c9;
  border-bottom: 0;
  border-radius: 4px 4px 0 0;
  background: linear-gradient(#fffbe6, #ffeeaa 50%, #ffd84a 52%, #fff0a6);
}
.tab span {
  color: #8285a5;
  font-weight: bold;
  font-size: 14px;
}
.client {
  margin: 0 6px;
  padding-left: 1px;
  border-left: 1px solid #b0aecb;
  border-right: 1px solid #fff;
  border-top: 1px solid #b9b7d0;
  border-bottom: 1px solid #fff;
  background: #fff;
}
.dock {
  height: 43px;
  background: #f0eff5;
  padding: 4px 0 0 2px;
}
.toolbar {
  display: inline-flex;
  align-items: center;
  gap: 1px;
  height: 36px;
  background: linear-gradient(#ffffff, #f3f3f8 45%, #dcdce7 75%, #c9c9d8);
  border-bottom: 2px solid #9a98b4;
  border-right: 1px solid #b5b5c8;
}
.grip {
  width: 15px;
  height: 10px;
  background: repeating-linear-gradient(90deg, #d8d8e2 0 1px, transparent 1px 3px);
  background-size: 7px 10px;
  background-repeat: no-repeat;
  background-position: 4px 0;
}
.combo {
  height: 27px;
  display: flex;
  background: #fff;
}
.symbol {
  width: 95px;
  margin-right: 4px;
}
.period {
  width: 110px;
  margin: 0 3px 0 2px;
}
.combo select {
  flex: 1;
  min-width: 0;
  appearance: none;
  border: 0;
  background: #fff;
  color: #222;
  padding: 0 3px;
  font: 14px "DejaVu Sans", sans-serif;
}
.combo i {
  width: 19px;
  display: flex;
  align-items: center;
  justify-content: center;
  background: linear-gradient(#fdfdfe, #d9d9e5);
}
.combo i::after {
  content: "";
  border: 5px solid transparent;
  border-top-color: #000;
  margin-top: 8px;
}
.tool {
  width: 34px;
  height: 31px;
  display: flex;
  align-items: center;
  justify-content: center;
}
.tool.on {
  background: linear-gradient(#fdba78, #ff9f45 50%, #ff9833);
  border: 1px solid #b07a2c;
}
.side {
  font-size: 10px;
}
.side span {
  line-height: 12px;
  border-bottom: 2px solid #ff6030;
}
.side.Bid span {
  border-color: #1080ff;
}
.abc {
  position: relative;
}
.abc-word {
  position: absolute;
  top: 2px;
  font-size: 8px;
  font-weight: bold;
  line-height: 10px;
}
.drop {
  width: 10px;
  height: 31px;
  display: flex;
  align-items: center;
  justify-content: center;
}
.drop::after {
  content: "";
  border: 3px solid transparent;
  border-top-color: #9b9bad;
  margin-top: 3px;
}
.sep {
  width: 5px;
  height: 31px;
  background: linear-gradient(90deg, transparent 2px, #c8c8d8 2px 3px, #fff 3px 4px, transparent 4px);
}
.more {
  width: 15px;
}
.panel {
  display: block;
  width: 100%;
  height: auto;
  font-size: 13px;
}
.axis {
  fill: #33336f;
}
.long {
  font-size: 13px;
  fill: #8bab78;
}
.rowname {
  font-size: 18px;
}
.split {
  height: 4px;
  background: #c3d0de;
}
.thin {
  height: 3px;
}
.taskbar {
  height: 49px;
  display: flex;
  align-items: center;
  background: linear-gradient(#1a1a1e 1px, #6a7078 2px, #1d1e20 3px, #0b0b0d 50%, #050506);
  color: #fff;
}
.start {
  width: 67px;
  display: flex;
  justify-content: center;
}
.dots {
  width: 10px;
  height: 38px;
  margin: 0 14px 0 3px;
  background: radial-gradient(#555 1px, transparent 1px) 0 0 / 4px 5px;
}
.tasks {
  display: flex;
  gap: 5px;
  min-width: 0;
  overflow: hidden;
}
.tasks + .dots {
  margin: 0 7px 0 13px;
}
.task {
  width: 58px;
  height: 47px;
  flex: none;
  display: flex;
  align-items: center;
  justify-content: center;
  border-radius: 3px;
}
.open {
  border: 1px solid #6c6e70;
  background: linear-gradient(#707275, #3b3c3e 50%, #222324);
}
.active {
  border: 1px solid #cfd6dc;
  background: linear-gradient(#d9e0e6, #97a3ae 50%, #b3c4d2);
}
.tray {
  margin-left: auto;
  display: flex;
  align-items: center;
  align-self: stretch;
  font: 13px "Open Sans", "Noto Sans", sans-serif;
}
.lang {
  margin-right: 16px;
}
.status {
  margin-right: 4px;
}
.clock {
  width: 88px;
  display: flex;
  flex-direction: column;
  align-items: center;
  line-height: 22px;
}
.peek {
  width: 14px;
  height: 49px;
  border-left: 1px solid #55585c;
  background: linear-gradient(135deg, #3a3c3f, #0c0c0e);
}
</style>
